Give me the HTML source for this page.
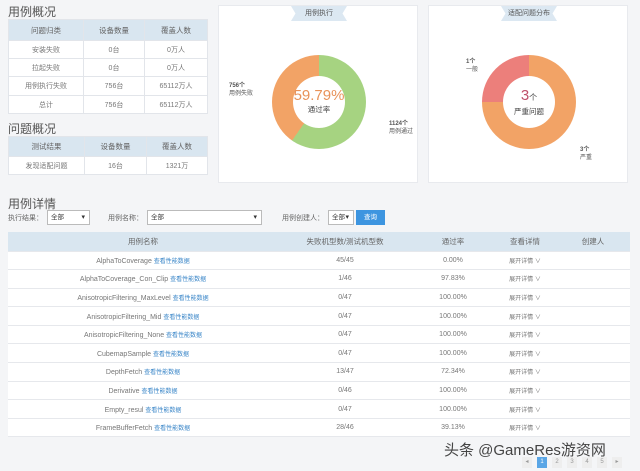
<!DOCTYPE html>
<html><head><meta charset="utf-8"><style>
*{margin:0;padding:0;box-sizing:border-box}
body{width:640px;height:471px;background:#f4f5f7;font-family:"Liberation Sans","Noto Sans CJK SC",sans-serif;color:#555;position:relative;overflow:hidden}
.abs{position:absolute}
.h{font-size:12px;color:#555;line-height:14px}
table{border-collapse:collapse;position:absolute;font-size:7px;color:#777}
td{text-align:center;border:1px solid #e2e5ea;background:#fff;vertical-align:middle}
tr.hd td{background:#d9e6f0;color:#666;font-size:7.5px}
.panel{position:absolute;background:#fff;border:1px solid #e8eaee}
.rib{position:absolute;top:0;height:15px;background:#dce8f2;font-size:7px;text-align:center;line-height:15px;color:#555;clip-path:polygon(0 0,100% 0,92% 50%,100% 100%,0 100%,8% 50%)}
.donut{position:absolute;width:94px;height:94px;border-radius:50%}
.hole{position:absolute;left:21px;top:21px;width:52px;height:52px;border-radius:50%;background:#fff;text-align:center}
.lbl{position:absolute;font-size:6px;color:#555;line-height:8px}
.sel{position:absolute;height:15px;border:1px solid #bbb;background:#fff;font-size:6.5px;line-height:13px;padding-left:3px;color:#333}
.sel:after{content:"▾";position:absolute;right:4px;top:0;font-size:7px}
.f{position:absolute;font-size:7px;color:#666;top:213px}
#dt{left:8px;top:232px;width:622px;font-size:7px}
#dt td{border:none;border-bottom:1px solid #e6e8ec;height:18.6px;color:#777}
#dt tr.hd td{height:19px;background:#d9e6f0;color:#666}
.lk{color:#3a86c8;font-size:6px}
.ex{color:#3a86c8;font-size:6px}
.pg{position:absolute;top:457px;width:10px;height:11px;font-size:6px;text-align:center;line-height:11px;color:#999;background:#eee}
</style></head><body>
<div class="abs h" style="left:8px;top:5px">用例概况</div>
<table style="left:8px;top:19px;width:200px">
<tr class="hd" style="height:21px"><td style="width:75px">问题归类</td><td style="width:61px">设备数量</td><td>覆盖人数</td></tr>
<tr style="height:18px"><td>安装失败</td><td>0台</td><td>0万人</td></tr>
<tr style="height:18px"><td>拉起失败</td><td>0台</td><td>0万人</td></tr>
<tr style="height:19px"><td>用例执行失败</td><td>756台</td><td>65112万人</td></tr>
<tr style="height:18px"><td>总计</td><td>756台</td><td>65112万人</td></tr>
</table>
<div class="abs h" style="left:8px;top:122px">问题概况</div>
<table style="left:8px;top:136px;width:200px">
<tr class="hd" style="height:20px"><td style="width:76px">测试结果</td><td style="width:62px">设备数量</td><td>覆盖人数</td></tr>
<tr style="height:18px"><td>发现适配问题</td><td>16台</td><td>1321万</td></tr>
</table>

<div class="panel" style="left:218px;top:5px;width:200px;height:178px">
<div class="rib" style="left:72px;width:56px">用例执行</div>
<div class="donut" style="left:53px;top:49px;background:conic-gradient(#a6d381 0 215deg,#f2a366 215deg 360deg)"><div class="hole"><div style="font-size:15px;color:#e8935a;margin-top:12px;line-height:16px">59.79%</div><div style="font-size:7.5px;color:#444">通过率</div></div></div>
<div class="lbl" style="left:10px;top:76px"><b>756个</b><br>用例失败</div>
<div class="lbl" style="left:170px;top:114px"><b>1124个</b><br>用例通过</div>
</div>
<div class="panel" style="left:428px;top:5px;width:200px;height:178px">
<div class="rib" style="left:72px;width:56px">适配问题分布</div>
<div class="donut" style="left:53px;top:49px;background:conic-gradient(#f2a366 0 270deg,#ec7f7b 270deg 360deg)"><div class="hole"><div style="font-size:15px;color:#c0506a;margin-top:11px;line-height:17px">3<span style="font-size:8px;color:#444">个</span></div><div style="font-size:7.5px;color:#444">严重问题</div></div></div>
<div class="lbl" style="left:37px;top:52px"><b>1个</b><br>一般</div>
<div class="lbl" style="left:151px;top:140px"><b>3个</b><br>严重</div>
</div>

<div class="abs h" style="left:8px;top:197px">用例详情</div>
<div class="f" style="left:8px">执行结果：</div><div class="sel" style="left:47px;top:210px;width:43px">全部</div>
<div class="f" style="left:108px">用例名称：</div><div class="sel" style="left:147px;top:210px;width:115px">全部</div>
<div class="f" style="left:282px">用例创建人：</div><div class="sel" style="left:328px;top:210px;width:26px">全部</div>
<div class="abs" style="left:356px;top:210px;width:29px;height:15px;background:#3d95e0;color:#fff;font-size:6.5px;text-align:center;line-height:15px">查询</div>

<table id="dt">
<tr class="hd"><td style="width:270px">用例名称</td><td style="width:134px">失败机型数/测试机型数</td><td style="width:82px">通过率</td><td style="width:62px">查看详情</td><td>创建人</td></tr>
<tr><td>AlphaToCoverage <span class="lk">查看性能数据</span></td><td>45/45</td><td>0.00%</td><td class="ex">展开详情 ∨</td><td></td></tr>
<tr><td>AlphaToCoverage_Con_Clip <span class="lk">查看性能数据</span></td><td>1/46</td><td>97.83%</td><td class="ex">展开详情 ∨</td><td></td></tr>
<tr><td>AnisotropicFiltering_MaxLevel <span class="lk">查看性能数据</span></td><td>0/47</td><td>100.00%</td><td class="ex">展开详情 ∨</td><td></td></tr>
<tr><td>AnisotropicFiltering_Mid <span class="lk">查看性能数据</span></td><td>0/47</td><td>100.00%</td><td class="ex">展开详情 ∨</td><td></td></tr>
<tr><td>AnisotropicFiltering_None <span class="lk">查看性能数据</span></td><td>0/47</td><td>100.00%</td><td class="ex">展开详情 ∨</td><td></td></tr>
<tr><td>CubemapSample <span class="lk">查看性能数据</span></td><td>0/47</td><td>100.00%</td><td class="ex">展开详情 ∨</td><td></td></tr>
<tr><td>DepthFetch <span class="lk">查看性能数据</span></td><td>13/47</td><td>72.34%</td><td class="ex">展开详情 ∨</td><td></td></tr>
<tr><td>Derivative <span class="lk">查看性能数据</span></td><td>0/46</td><td>100.00%</td><td class="ex">展开详情 ∨</td><td></td></tr>
<tr><td>Empty_resul <span class="lk">查看性能数据</span></td><td>0/47</td><td>100.00%</td><td class="ex">展开详情 ∨</td><td></td></tr>
<tr><td>FrameBufferFetch <span class="lk">查看性能数据</span></td><td>28/46</td><td>39.13%</td><td class="ex">展开详情 ∨</td><td></td></tr>
</table>

<div class="abs" style="left:444px;top:439px;font-size:15px;color:#444">头条 @GameRes游资网</div>
<div class="pg" style="left:522px">◂</div>
<div class="pg" style="left:537px;background:#5aa6e6;color:#fff">1</div>
<div class="pg" style="left:552px">2</div>
<div class="pg" style="left:567px">3</div>
<div class="pg" style="left:582px">4</div>
<div class="pg" style="left:597px">5</div>
<div class="pg" style="left:612px">▸</div>
</body></html>
